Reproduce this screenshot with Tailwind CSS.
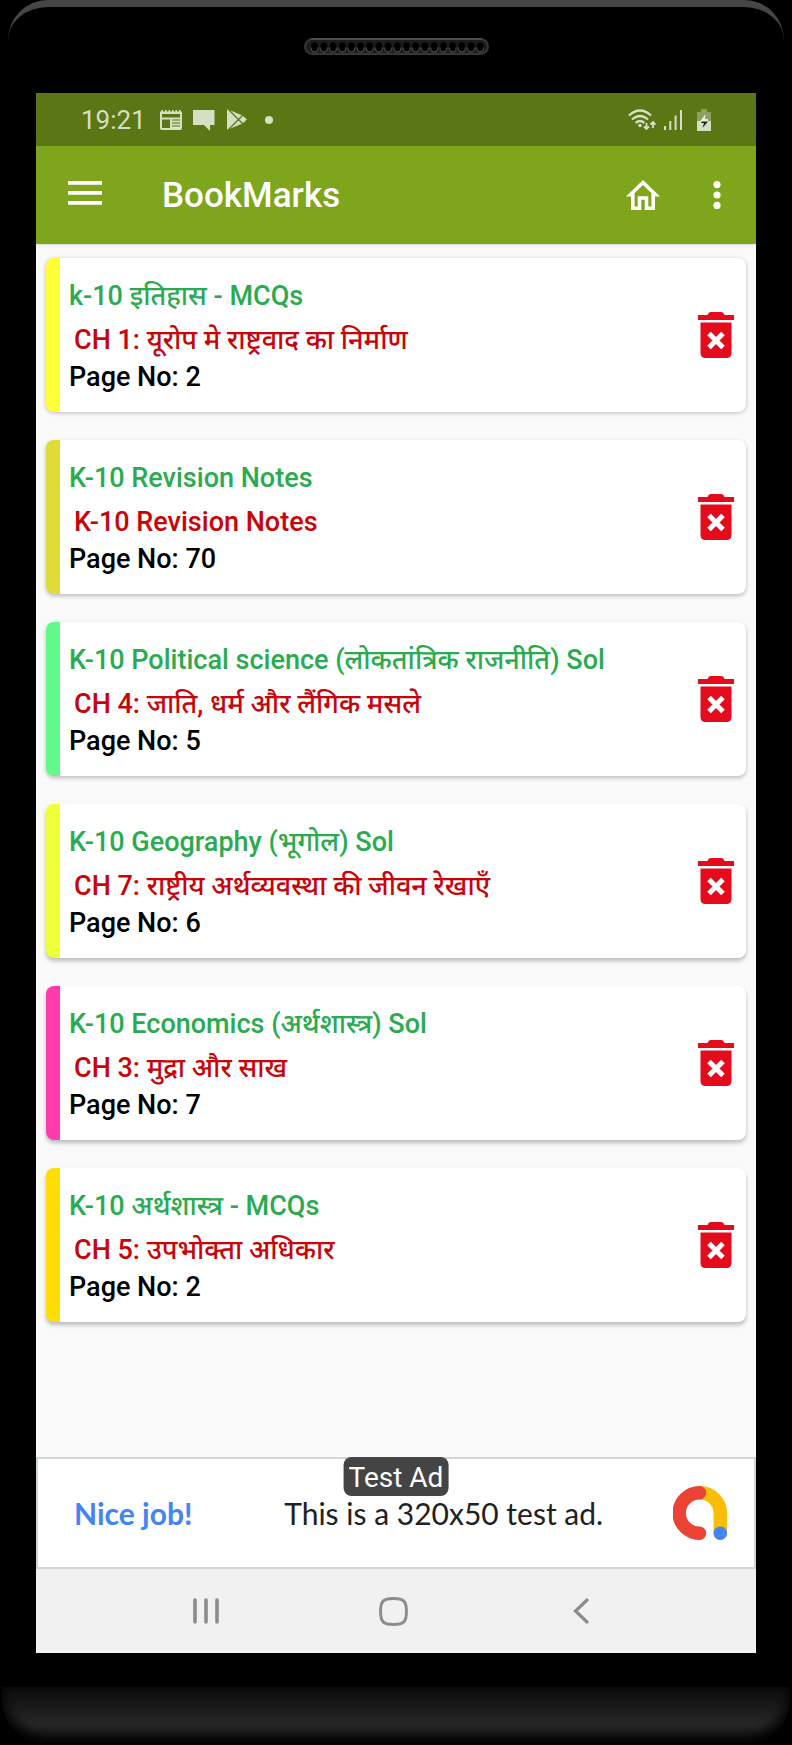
<!DOCTYPE html>
<html lang="hi">
<head>
    <meta charset="UTF-8">
    <meta name="viewport" content="width=device-width, initial-scale=1.0">
    <title>BookMarks</title>
    <script src="https://cdn.jsdelivr.net/npm/@tailwindcss/browser@4"></script>
</head>
<body class="bg-black font-[Roboto,'Noto_Sans_Devanagari','Noto_Sans',sans-serif]">
    <!-- Shared icons -->
    <svg class="hidden">
        <symbol id="icon-trash" viewBox="0 0 36 46">
            <path fill="#e30b1c" d="M0 3h9.500q1-3 3.500-3h10q2.500 0 3.500 3H36v5H0zM2.500 10.500h31V41q0 5-5 5h-21q-5 0-5-5z"/>
            <path stroke="#fff" stroke-width="5" d="m11 21.500 14 14m0-14-14 14"/>
        </symbol>
    </svg>

    <div class="min-h-screen flex flex-col">
        <!-- Top of the phone -->
        <div class="h-[93px] mx-2 border-t-[7px] border-[#464646] rounded-t-[40px] flex justify-center items-start pt-[31px]">
            <svg class="w-[185px] h-[17px]" viewBox="0 0 185 17">
                <defs>
                    <pattern id="holes" x="6" y="0" width="9.200" height="17" patternUnits="userSpaceOnUse">
                        <ellipse cx="4.600" cy="9" rx="3.600" ry="4.800" fill="#000"/>
                        <path d="M1 9.500a3.600 4.600 0 0 0 7.200 0" fill="none" stroke="#555" stroke-width="1"/>
                    </pattern>
                </defs>
                <rect x="1" y="1" width="183" height="15" rx="7.500" fill="#1c1c1c" stroke="#363636" stroke-width="2"/>
                <path d="M7 1h171" stroke="#555" stroke-width="1.500"/>
                <rect x="6" y="0" width="174" height="17" fill="url(#holes)"/>
            </svg>
        </div>

        <!-- Screen -->
        <div class="mx-9 flex-1 flex flex-col bg-[#fafafa]">
            <!-- Status bar -->
            <div class="h-[53px] bg-[#5a7615] text-[#d6dfc3] flex items-center pl-[45px] pr-[45px]">
                <span class="text-[26px] leading-8">19:21</span>
                <svg class="w-[22px] h-5 ml-3.5" viewBox="0 0 22 20" fill="currentColor">
                    <path fill-rule="evenodd" d="M0 1.500h1.500V0H3v1.500h2V0h1.500v1.500h2V0H10v1.500h2V0h1.500v1.500h2V0H17v1.500h2V0h1.500v1.500H22V18q0 2-2 2H2q-2 0-2-2zM2 4v3.500h18V4zM2 9.500v8.500h8V9.500z"/>
                    <path fill="#5a7615" d="M12 9.500h8v1h-8zm0 3h8v1h-8zm0 3h8v1h-8z"/>
                </svg>
                <svg class="w-[22px] h-[22px] ml-[11px]" viewBox="0 0 22 22" fill="currentColor">
                    <path d="M0 1h21.500v15H17v6l-6-6H0z"/>
                </svg>
                <svg class="w-5 h-[21px] ml-3" viewBox="0 0 20 21">
                    <path fill="currentColor" d="M0 0 15.500 6.500 20 10.500 15.500 14.500 0 21z"/>
                    <path stroke="#5a7615" stroke-width="1.300" fill="none" d="M1 0l15 15M1 21 16 6"/>
                </svg>
                <span class="size-2 rounded-full bg-current ml-[18px]"></span>

                <svg class="w-7 h-[22px] ml-auto" viewBox="0 0 28 22" fill="none" stroke="currentColor">
                    <path stroke-width="2.200" d="M1 6.500Q12 -3.500 23 6.500M4 10.500q8-7 16 0M7.500 14q4.500-4 9 0"/>
                    <circle cx="12" cy="16.500" r="1.800" fill="currentColor" stroke="none"/>
                    <path stroke-width="1.800" d="M18.500 14v6M16 17.500l2.500 2.500 2.500-2.500M25 19v-6M22.500 15.500 25 13l2.500 2.500"/>
                </svg>
                <svg class="w-[18px] h-5 ml-2" viewBox="0 0 18 20" fill="currentColor">
                    <path d="M0 16h2v4H0zM5.300 11h2v9h-2zM10.600 5.500h2V20h-2zM16 0h2v20h-2z"/>
                </svg>
                <svg class="w-3.5 h-[22px] ml-[15px]" viewBox="0 0 14 22">
                    <path fill="#8da061" d="M4 0h6v3h4v9H0V3h4z"/>
                    <path fill="currentColor" d="M0 12h14v10H0z"/>
                    <path fill="#e9eedd" d="M8.500 5 3 12.500h8V10H8z"/>
                    <path fill="#222" d="M5 12.500h6L5.500 19l1.500-5H4z"/>
                </svg>
            </div>

            <!-- App bar -->
            <header class="h-[98px] bg-[#7fa51d] text-white flex items-center pl-8 pr-[35px] shadow-sm">
                <button type="button" aria-label="Menu">
                    <svg class="w-[34px] h-6 -mt-1" viewBox="0 0 34 24" fill="currentColor">
                        <path d="M0 0h34v3.800H0zM0 10h34v3.800H0zM0 20h34v3.800H0z"/>
                    </svg>
                </button>
                <h1 class="text-[35px] leading-10 font-medium ml-[60px] pt-0.5">BookMarks</h1>
                <a href="#" class="ml-auto" aria-label="Home">
                    <svg class="w-[34px] h-[30px]" viewBox="0 0 34 30" fill="none" stroke="currentColor" stroke-width="3.600">
                        <path d="M6.800 13.500v14.700h6.700V18h7v10.200h6.700V13.500"/>
                        <path fill="currentColor" stroke="none" d="M0 16.500 17 0l17 16.500h-5L17 5 5 16.500z"/>
                    </svg>
                </a>
                <button type="button" class="ml-[53px]" aria-label="More options">
                    <svg class="w-2 h-7" viewBox="0 0 8 28" fill="currentColor">
                        <circle cx="4" cy="3.600" r="3.600"/>
                        <circle cx="4" cy="14" r="3.600"/>
                        <circle cx="4" cy="24.400" r="3.600"/>
                    </svg>
                </button>
            </header>

            <!-- Bookmark list -->
            <main class="flex-1 flex flex-col gap-7 px-2.5 pt-3.5 pb-8 text-[27px] font-medium">
                <article class="flex items-center bg-white rounded-lg border-l-[14px] border-[#ffff38] pl-[9px] pr-3 shadow-[0_1px_4px_rgba(0,0,0,0.25)]">
                    <div class="flex-1 pt-5 pb-4">
                        <h2 class="leading-9 text-[#2bab50]">k-10 इतिहास - MCQs</h2>
                        <p class="leading-9 mt-2 pl-[5px] text-[#c80408]">CH 1: यूरोप मे राष्ट्रवाद का निर्माण</p>
                        <p class="leading-[38px] text-black">Page No: 2</p>
                    </div>
                    <button type="button" aria-label="Delete"><svg class="w-9 h-[46px]"><use href="#icon-trash"/></svg></button>
                </article>

                <article class="flex items-center bg-white rounded-lg border-l-[14px] border-[#dddc38] pl-[9px] pr-3 shadow-[0_2px_4px_rgba(0,0,0,0.25)]">
                    <div class="flex-1 pt-5 pb-4">
                        <h2 class="leading-9 text-[#2bab50]">K-10 Revision Notes</h2>
                        <p class="leading-9 mt-2 pl-[5px] text-[#c80408]">K-10 Revision Notes</p>
                        <p class="leading-[38px] text-black">Page No: 70</p>
                    </div>
                    <button type="button" aria-label="Delete"><svg class="w-9 h-[46px]"><use href="#icon-trash"/></svg></button>
                </article>

                <article class="flex items-center bg-white rounded-lg border-l-[14px] border-[#62f98b] pl-[9px] pr-3 shadow-[0_2px_4px_rgba(0,0,0,0.25)]">
                    <div class="flex-1 pt-5 pb-4">
                        <h2 class="leading-9 text-[#2bab50]">K-10 Political science (लोकतांत्रिक राजनीति) Sol</h2>
                        <p class="leading-9 mt-2 pl-[5px] text-[#c80408]">CH 4: जाति, धर्म और लैंगिक मसले</p>
                        <p class="leading-[38px] text-black">Page No: 5</p>
                    </div>
                    <button type="button" aria-label="Delete"><svg class="w-9 h-[46px]"><use href="#icon-trash"/></svg></button>
                </article>

                <article class="flex items-center bg-white rounded-lg border-l-[14px] border-[#efff38] pl-[9px] pr-3 shadow-[0_3px_4px_rgba(0,0,0,0.25)]">
                    <div class="flex-1 pt-5 pb-4">
                        <h2 class="leading-9 text-[#2bab50]">K-10 Geography (भूगोल) Sol</h2>
                        <p class="leading-9 mt-2 pl-[5px] text-[#c80408]">CH 7: राष्ट्रीय अर्थव्यवस्था की जीवन रेखाएँ</p>
                        <p class="leading-[38px] text-black">Page No: 6</p>
                    </div>
                    <button type="button" aria-label="Delete"><svg class="w-9 h-[46px]"><use href="#icon-trash"/></svg></button>
                </article>

                <article class="flex items-center bg-white rounded-lg border-l-[14px] border-[#ff3cac] pl-[9px] pr-3 shadow-[0_3px_4px_rgba(0,0,0,0.25)]">
                    <div class="flex-1 pt-5 pb-4">
                        <h2 class="leading-9 text-[#2bab50]">K-10 Economics (अर्थशास्त्र) Sol</h2>
                        <p class="leading-9 mt-2 pl-[5px] text-[#c80408]">CH 3: मुद्रा और साख</p>
                        <p class="leading-[38px] text-black">Page No: 7</p>
                    </div>
                    <button type="button" aria-label="Delete"><svg class="w-9 h-[46px]"><use href="#icon-trash"/></svg></button>
                </article>

                <article class="flex items-center bg-white rounded-lg border-l-[14px] border-[#ffde05] pl-[9px] pr-3 shadow-[0_3px_4px_rgba(0,0,0,0.25)]">
                    <div class="flex-1 pt-5 pb-4">
                        <h2 class="leading-9 text-[#2bab50]">K-10 अर्थशास्त्र - MCQs</h2>
                        <p class="leading-9 mt-2 pl-[5px] text-[#c80408]">CH 5: उपभोक्ता अधिकार</p>
                        <p class="leading-[38px] text-black">Page No: 2</p>
                    </div>
                    <button type="button" aria-label="Delete"><svg class="w-9 h-[46px]"><use href="#icon-trash"/></svg></button>
                </article>
            </main>

            <!-- Ad banner -->
            <aside class="relative h-28 bg-white border-2 border-[#cfd6da] flex items-center justify-between pl-9 pr-[27px] text-[30px] font-[Lato,sans-serif]">
                <span class="text-[#4285f4] font-bold">Nice job!</span>
                <span class="text-[#202124] ml-[22px]">This is a 320x50 test ad.</span>
                <svg class="size-[54px]" viewBox="0 0 54 54" fill="none" stroke-width="13.400" stroke-linecap="round">
                    <path stroke="#fbbc04" d="M27 6.700A20.300 20.300 0 0 1 47.300 27v20.300"/>
                    <path stroke="#ea4335" d="M26.500 6.700a20.300 20.300 0 0 0 0 40.600"/>
                    <circle cx="47.300" cy="47.300" r="6.700" fill="#4285f4" stroke="none"/>
                </svg>
                <span class="absolute -top-0.5 left-1/2 -translate-x-1/2 bg-[#444] text-white rounded-lg px-[5px] pt-[3px] text-[28px] leading-9 whitespace-nowrap font-[Roboto,sans-serif]">Test Ad</span>
            </aside>

            <!-- Navigation buttons -->
            <nav class="h-21 bg-[#f1f1f1] text-[#8c8c8c] flex items-center pl-[157px]">
                <button type="button" aria-label="Recent apps">
                    <svg class="w-[26px] h-[26px]" viewBox="0 0 26 26" stroke="currentColor" stroke-width="3.600" stroke-linecap="round">
                        <path d="M2 2v22M13 2v22M24 2v22"/>
                    </svg>
                </button>
                <button type="button" class="ml-40" aria-label="Home screen">
                    <svg class="w-[29px] h-[29px]" viewBox="0 0 28 28" fill="none" stroke="currentColor" stroke-width="2.800">
                        <path d="M14 1.500c10 0 12.500 2.500 12.500 12.500S24 26.500 14 26.500 1.500 24 1.500 14 4 1.500 14 1.500z"/>
                    </svg>
                </button>
                <button type="button" class="ml-[165px]" aria-label="Back">
                    <svg class="w-4 h-[26px]" viewBox="0 0 16 26" fill="none" stroke="currentColor" stroke-width="3.200" stroke-linecap="round">
                        <path d="M14 2 2.500 13 14 24"/>
                    </svg>
                </button>
            </nav>
        </div>

        <!-- Bottom of the phone -->
        <div class="pt-[34px] pb-0.5">
            <div class="h-14 mx-0.5 rounded-b-[44px] bg-linear-to-b from-[#0b0b0b] via-[#272727] via-65% to-[#222] shadow-[inset_0_-8px_12px_#000]"></div>
        </div>
    </div>
</body>
</html>
